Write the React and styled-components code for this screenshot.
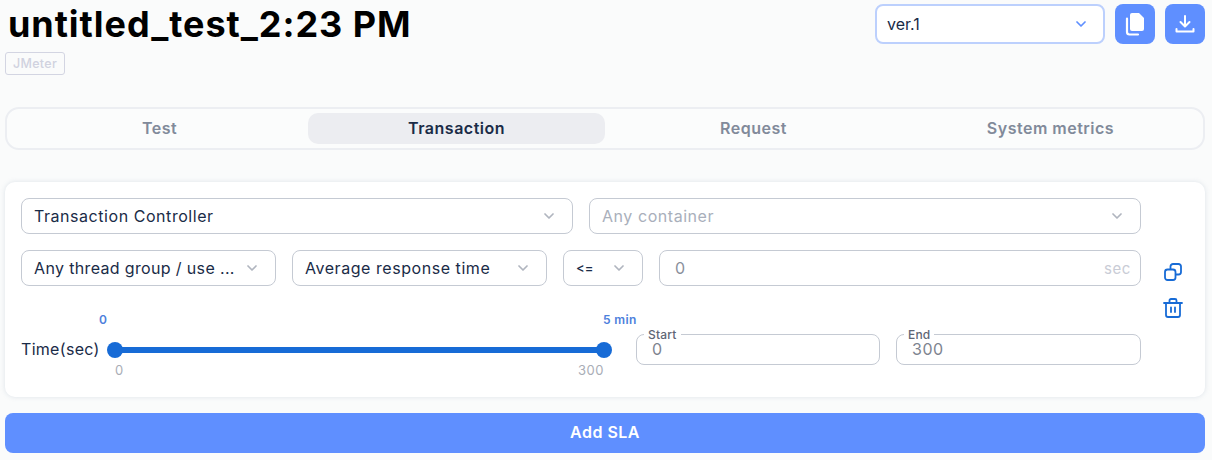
import React from "react";
import styled, { createGlobalStyle } from "styled-components";

const Global = createGlobalStyle`
  html, body { margin: 0; padding: 0; background: #fafbfb; }
  body { font-family: "Inter", "Open Sans", sans-serif; color: #1a2b47; }
  * { box-sizing: border-box; }
`;
const Page = styled.div`
  width: 1212px; height: 460px; padding: 0 7px 0 5px; overflow: hidden;
  display: flex; flex-direction: column;
`;
const Header = styled.header`
  display: flex; justify-content: space-between; align-items: flex-start; height: 107px;
`;
const TitleBlock = styled.div`display: flex; flex-direction: column; align-items: flex-start;`;
const Title = styled.h1`
  margin: 0 0 0 3px; height: 52px; font-size: 36px; line-height: 48px; font-weight: 700; color: #000;
  letter-spacing: 0.95px; white-space: nowrap;
`;
const Badge = styled.span`
  width: 60px; height: 23px; border: 1px solid #d3d5e2; border-radius: 3px; color: #d0d2df;
  font-size: 12.5px; font-weight: 500; line-height: 21px; text-align: center; letter-spacing: 0.3px;
`;
const Actions = styled.div`display: flex; align-items: center; gap: 10px; padding-top: 4px;`;
const VersionSelect = styled.div`
  width: 230px; height: 40px; background: #fff; border: 2px solid #bcd0fd; border-radius: 8px;
  display: flex; align-items: center; justify-content: space-between; padding: 0 17px 0 10px;
  font-size: 16px; color: #1a2b47;
`;
const IconButton = styled.button`
  width: 40px; height: 40px; padding: 0; border: 0; border-radius: 8px; background: #5f8fff; color: #fff;
  display: flex; align-items: center; justify-content: center;
`;
const Tabs = styled.nav`
  height: 43px; border: 2px solid #eceef2; border-radius: 14px; padding: 4px;
  display: grid; grid-template-columns: repeat(4, 1fr); background: #fbfcfc;
`;
const Tab = styled.div`
  display: flex; align-items: center; justify-content: center; border-radius: 10px;
  font-size: 16px; font-weight: 600; height: 31px; letter-spacing: 0.5px; padding-bottom: 2px;
  color: ${p => (p.$active ? "#1a2b47" : "#818a9a")};
  background: ${p => (p.$active ? "#ecedf1" : "transparent")};
`;
const Card = styled.section`
  margin-top: 32px; height: 215px; background: #fff; border-radius: 10px;
  box-shadow: 0 0 5px rgba(120, 140, 170, 0.22); padding: 16px;
  display: grid; grid-template-columns: 1120px 1fr;
`;
const Fields = styled.div`display: flex; flex-direction: column; gap: 16px;`;
const Row = styled.div`display: flex; gap: 16px;`;
const SelectBox = styled.div`
  width: ${p => p.$w}px; height: 36px; border: 1px solid #c5cad3; border-radius: 8px; background: #fff;
  display: flex; align-items: center; justify-content: space-between;
  padding: 0 18px 0 12px; font-size: 16px; letter-spacing: ${p => p.$tight ? "0.35px" : "0.55px"}; white-space: nowrap;
  color: ${p => (p.$placeholder ? "#a9afbb" : "#1a2b47")};
`;
const Small = styled.span`font-size: 13px; font-weight: 500; letter-spacing: 0;`;
const NumberBox = styled(SelectBox)`
  flex: 1; padding: 0 9px 0 15px; color: #8a909c;
`;
const Unit = styled.span`color: #c9ccd6; font-size: 15px; letter-spacing: 0.6px;`;
const SliderRow = styled.div`display: flex; align-items: flex-start; height: 31px; margin-top: 32px;`;
const SliderLabel = styled.div`
  width: 86px; flex: none; font-size: 16px; letter-spacing: 0.3px; line-height: 31px; white-space: nowrap;
`;
const SliderTrack = styled.div`
  position: relative; width: 505px; height: 31px; margin-right: 24px; flex: none;
`;
const Bar = styled.div`
  position: absolute; left: 8px; right: 8px; top: 13px; height: 6px; background: #176bd6;
`;
const Thumb = styled.div`
  position: absolute; top: 8px; width: 16px; height: 16px; border-radius: 50%; background: #176bd6;
  left: ${p => (p.$end ? "489px" : "0")};
`;
const TopMark = styled.span`
  position: absolute; top: -22px; font-size: 12px; font-weight: 600; color: #4d80dc; white-space: nowrap;
  letter-spacing: 0.4px;
  ${p => (p.$end ? "left: 496px;" : "left: -8px;")}
`;
const BottomMark = styled.span`
  position: absolute; top: 28px; font-size: 13px; color: #a9adb6; letter-spacing: 0.5px;
  ${p => (p.$end ? "right: 8px;" : "left: 8px;")}
`;
const RangeInput = styled.div`
  position: relative; width: ${p => p.$w}px; height: 31px; border: 1px solid #c5cad3; border-radius: 8px;
  padding: 0 0 1px 15px; display: flex; align-items: center; margin-right: 16px;
  &:last-child { margin-right: 0; }
`;
const RangeValue = styled.span`
  font-size: 16px; letter-spacing: 0.5px; line-height: 16px; color: #7e8490;
`;
const Legend = styled.span`
  position: absolute; left: 7px; top: -6px; padding: 0 4px; background: #fff; color: #5e6675;
  font-size: 12px; line-height: 12px; font-weight: 500; letter-spacing: 0.2px;
`;
const SideIcons = styled.div`
  display: flex; flex-direction: column; align-items: center; gap: 17px; padding: 65px 0 0 16px; color: #176bd6;
`;
const AddButton = styled.button`
  margin-top: 16px; height: 40px; width: 100%; border: 0; border-radius: 8px; background: #5f8fff; color: #fff;
  font: 600 16px "Inter", sans-serif; letter-spacing: 0.5px; padding-bottom: 3px;
`;

const Chevron = ({ color = "#b0b5bf" }) => (
  <svg width="10" height="6" viewBox="0 0 10 6" fill="none" stroke={color} strokeWidth="1.7" strokeLinecap="round" strokeLinejoin="round">
    <path d="M1 1l4 4 4-4" />
  </svg>
);

export default function App() {
  return (
    <Page>
      <Global />
      <Header>
        <TitleBlock>
          <Title>untitled_test_2:23 PM</Title>
          <Badge>JMeter</Badge>
        </TitleBlock>
        <Actions>
          <VersionSelect>ver.1<Chevron color="#5f8fff" /></VersionSelect>
          <IconButton aria-label="Copy">
            <svg width="22" height="24" viewBox="0 0 22 24" fill="none">
              <path d="M8 1h7l5 5v11a2 2 0 0 1-2 2H8a2 2 0 0 1-2-2V3a2 2 0 0 1 2-2Z" fill="#fff" />
              <path d="M3 6.5V20a2.5 2.5 0 0 0 2.5 2.5H14" stroke="#fff" strokeWidth="2.2" strokeLinecap="round" />
            </svg>
          </IconButton>
          <IconButton aria-label="Download">
            <svg width="20" height="20" viewBox="0 0 20 20" fill="none" stroke="#fff" strokeWidth="2" strokeLinecap="round" strokeLinejoin="round">
              <path d="M10 2v10M5.5 8 10 12.5 14.5 8M1.5 15v2.5h17V15" />
            </svg>
          </IconButton>
        </Actions>
      </Header>
      <Tabs>
        <Tab>Test</Tab>
        <Tab $active>Transaction</Tab>
        <Tab>Request</Tab>
        <Tab>System metrics</Tab>
      </Tabs>
      <Card>
        <Fields>
          <Row>
            <SelectBox $w={552}>Transaction Controller<Chevron /></SelectBox>
            <SelectBox $w={552} $placeholder>Any container<Chevron /></SelectBox>
          </Row>
          <Row>
            <SelectBox $w={255} $tight>Any thread group / use ...<Chevron /></SelectBox>
            <SelectBox $w={255}>Average response time<Chevron /></SelectBox>
            <SelectBox $w={80}><Small>&lt;=</Small><Chevron /></SelectBox>
            <NumberBox>0<Unit>sec</Unit></NumberBox>
          </Row>
          <SliderRow>
            <SliderLabel>Time(sec)</SliderLabel>
            <SliderTrack>
              <Bar />
              <Thumb />
              <Thumb $end />
              <TopMark>0</TopMark>
              <TopMark $end>5 min</TopMark>
              <BottomMark>0</BottomMark>
              <BottomMark $end>300</BottomMark>
            </SliderTrack>
            <RangeInput $w={244}><Legend>Start</Legend><RangeValue>0</RangeValue></RangeInput>
            <RangeInput $w={245}><Legend>End</Legend><RangeValue>300</RangeValue></RangeInput>
          </SliderRow>
        </Fields>
        <SideIcons>
          <svg width="18" height="18" viewBox="0 0 18 18" fill="none" stroke="currentColor" strokeWidth="1.8" strokeLinejoin="round">
            <rect x="1" y="6.5" width="10.5" height="10.5" rx="2.5" />
            <path d="M6.5 6.5V3.5A2.5 2.5 0 0 1 9 1h5.5A2.5 2.5 0 0 1 17 3.5V9a2.5 2.5 0 0 1-2.5 2.5h-3" />
          </svg>
          <svg width="20" height="20" viewBox="0 0 20 20" fill="none" stroke="currentColor" strokeWidth="1.8" strokeLinecap="round" strokeLinejoin="round">
            <path d="M1 5h18M6.5 5V2.5A1.5 1.5 0 0 1 8 1h4a1.5 1.5 0 0 1 1.5 1.5V5M3 5v12a2 2 0 0 0 2 2h10a2 2 0 0 0 2-2V5M8 9.5v4.5M12 9.5v4.5" />
          </svg>
        </SideIcons>
      </Card>
      <AddButton>Add SLA</AddButton>
    </Page>
  );
}
